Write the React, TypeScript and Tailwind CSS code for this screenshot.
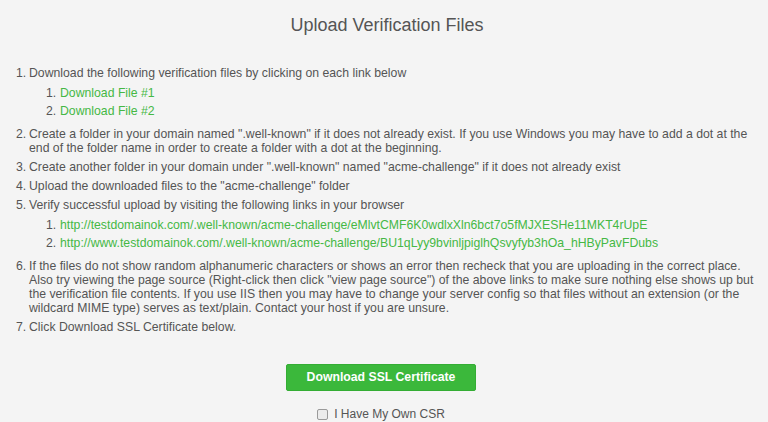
import React from 'react';

const files = ['Download File #1', 'Download File #2'];

const links = [
  'http://testdomainok.com/.well-known/acme-challenge/eMlvtCMF6K0wdlxXln6bct7o5fMJXESHe11MKT4rUpE',
  'http://www.testdomainok.com/.well-known/acme-challenge/BU1qLyy9bvinljpiglhQsvyfyb3hOa_hHByPavFDubs',
];

const SubList = ({ items }: { items: string[] }) => (
  <ol className="pl-[17px] pt-[6px]">
    {items.map((item, i) => (
      <li key={i} className="flex mb-[4px]">
        <span className="w-[14px] shrink-0">{i + 1}.</span>
        <a href="#" className="text-[#45b845]">{item}</a>
      </li>
    ))}
  </ol>
);

const Step = ({ n, children }: { n: number; children: React.ReactNode }) => (
  <li className="flex mb-[5px]">
    <span className="w-[13px] shrink-0">{n}.</span>
    <div className="flex-1">{children}</div>
  </li>
);

export default function App() {
  return (
    <div
      className="min-h-screen bg-[#f4f4f4] text-[#555] pl-[16px] pr-[10px]"
      style={{ fontFamily: '"Liberation Sans", Arial, sans-serif' }}
    >
      <h1 className="text-[18px] leading-[22px] text-center pt-[14px] mb-[30px] text-[#555]">
        Upload Verification Files
      </h1>

      <ol className="text-[12.25px] leading-[14px]">
        <Step n={1}>
          Download the following verification files by clicking on each link below
          <SubList items={files} />
        </Step>
        <Step n={2}>
          Create a folder in your domain named ".well-known" if it does not already exist. If you use
          Windows you may have to add a dot at the end of the folder name in order to create a folder
          with a dot at the beginning.
        </Step>
        <Step n={3}>
          Create another folder in your domain under ".well-known" named "acme-challenge" if it does
          not already exist
        </Step>
        <Step n={4}>Upload the downloaded files to the "acme-challenge" folder</Step>
        <Step n={5}>
          Verify successful upload by visiting the following links in your browser
          <SubList items={links} />
        </Step>
        <Step n={6}>
          If the files do not show random alphanumeric characters or shows an error then recheck that
          you are uploading in the correct place. Also try viewing the page source (Right-click then
          click "view page source") of the above links to make sure nothing else shows up but the
          verification file contents. If you use IIS then you may have to change your server config so
          that files without an extension (or the wildcard MIME type) serves as text/plain. Contact
          your host if you are unsure.
        </Step>
        <Step n={7}>Click Download SSL Certificate below.</Step>
      </ol>

      <div className="flex flex-col items-center pt-[25px] pr-[12px]">
        <button className="w-[190px] h-[27px] bg-[#3bb83b] border border-[#34ad34] rounded-[2px] text-white font-bold text-[12.25px]">
          Download SSL Certificate
        </button>
        <label className="flex items-center gap-[6px] mt-[14px] text-[12px]">
          <input
            type="checkbox"
            className="appearance-none w-[11px] h-[11px] border border-[#9a9a9a] rounded-[2px] bg-[#ececec]"
          />
          I Have My Own CSR
        </label>
      </div>
    </div>
  );
}
